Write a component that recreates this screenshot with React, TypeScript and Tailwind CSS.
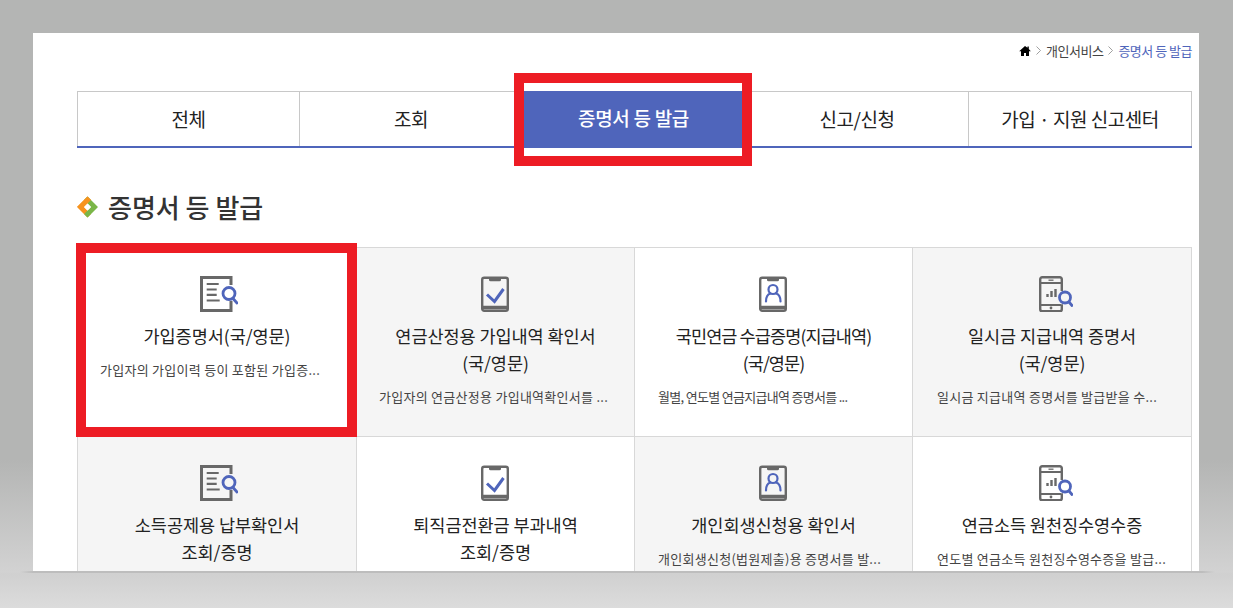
import React from "react";

const G = "#686868";
const B = "#4f65bb";

function DocIcon() {
  return (
    <svg width="38" height="36" viewBox="0 0 38 36" fill="none" className="ml-[4px]">
      <path d="M31 9V1.500H1.500v33H31V25" stroke={G} strokeWidth="3" />
      <path d="M6.700 8h12M6.700 13.500h10M6.700 18.800h10M6.700 24.500h13" stroke={G} strokeWidth="2.200" />
      <circle cx="29" cy="17.500" r="6" stroke={B} strokeWidth="2.800" fill="none" />
      <path d="M33 22.500l4 4.500" stroke={B} strokeWidth="2.800" strokeLinecap="round" />
    </svg>
  );
}

function Clipboard({ children }: { children: React.ReactNode }) {
  return (
    <svg width="28" height="36" viewBox="0 0 28 36" fill="none" className="mr-[2px]">
      <rect x="1.200" y="1.700" width="25.600" height="33" rx="2" stroke={G} strokeWidth="2.400" />
      <path d="M1.500 31.500h25" stroke={G} strokeWidth="3.500" />
      <path d="M8 1h12v2.800a1.500 1.500 0 0 1-1.500 1.500h-9A1.500 1.500 0 0 1 8 3.800z" fill={G} />
      {children}
    </svg>
  );
}

function CheckIcon() {
  return (
    <Clipboard>
      <path d="M6 18.500l7.500 7 9-12.500" stroke={B} strokeWidth="3" />
    </Clipboard>
  );
}

function PersonIcon() {
  return (
    <Clipboard>
      <circle cx="14" cy="13.500" r="4.500" stroke={B} strokeWidth="2.200" />
      <path d="M7 25.500c0-5 2.500-7.500 4.500-8M21.500 25.500c0-5-2.500-7.500-4.500-8" stroke={B} strokeWidth="2.200" strokeLinecap="round" />
    </Clipboard>
  );
}

function PhoneIcon() {
  return (
    <svg width="34" height="36" viewBox="0 0 34 36" fill="none" className="ml-[7px]">
      <path d="M22.800 15V3.300a2 2 0 0 0-2-2H3.200a2 2 0 0 0-2 2v30a2 2 0 0 0 2 2h17.600a2 2 0 0 0 2-2v-5" stroke={G} strokeWidth="2.400" />
      <path d="M2 7h20M2 29h20" stroke={G} strokeWidth="2" />
      <path d="M9.500 4.200h5" stroke={G} strokeWidth="1.300" />
      <circle cx="12" cy="32" r="1.400" fill={G} />
      <path d="M8.500 21v-3M12.500 21v-6M16.500 21v-8" stroke={G} strokeWidth="2.400" />
      <circle cx="26" cy="21.500" r="5.500" stroke={B} strokeWidth="2.800" />
      <path d="M30 26l3 3.500" stroke={B} strokeWidth="2.800" strokeLinecap="round" />
    </svg>
  );
}

function Chevron() {
  return (
    <svg width="5" height="9" viewBox="0 0 5 9" fill="none" className="mt-[4px]">
      <path d="M0.500 0.500l4 4-4 4" stroke="#888" strokeWidth="0.800" />
    </svg>
  );
}

const WHITE = "bg-white";
const GRAY = "bg-[#f5f5f5]";
const TITLE = "tracking-[-0.05px]";
const DESC = "tracking-[0.27px]";

const cards = [
  { icon: <DocIcon />, t: ["가입증명서(국/영문)"], d: "가입자의 가입이력 등이 포함된 가입증...", bg: WHITE, ts: TITLE, ds: DESC, ml: "ml-[22px]" },
  { icon: <CheckIcon />, t: ["연금산정용 가입내역 확인서", "(국/영문)"], d: "가입자의 연금산정용 가입내역확인서를 ...", bg: GRAY, ts: TITLE, ds: DESC, ml: "ml-[22px]" },
  { icon: <PersonIcon />, t: ["국민연금 수급증명(지급내역)", "(국/영문)"], d: "월별, 연도별 연금지급내역 증명서를 ...", bg: WHITE, ts: "tracking-[-0.9px]", ds: "tracking-[-0.7px]", ml: "ml-[23px]" },
  { icon: <PhoneIcon />, t: ["일시금 지급내역 증명서", "(국/영문)"], d: "일시금 지급내역 증명서를 발급받을 수...", bg: GRAY, ts: TITLE, ds: DESC, ml: "ml-[24px]" },
  { icon: <DocIcon />, t: ["소득공제용 납부확인서", "조회/증명"], d: "", bg: GRAY, ts: TITLE, ds: DESC, ml: "ml-[22px]" },
  { icon: <CheckIcon />, t: ["퇴직금전환금 부과내역", "조회/증명"], d: "", bg: WHITE, ts: TITLE, ds: DESC, ml: "ml-[22px]" },
  { icon: <PersonIcon />, t: ["개인회생신청용 확인서"], d: "개인회생신청(법원제출)용 증명서를 발...", bg: GRAY, ts: TITLE, ds: DESC, ml: "ml-[23px]" },
  { icon: <PhoneIcon />, t: ["연금소득 원천징수영수증"], d: "연도별 연금소득 원천징수영수증을 발급...", bg: WHITE, ts: TITLE, ds: DESC, ml: "ml-[24px]" },
];

const tabs = [
  { t: "전체", w: "w-[222px]" },
  { t: "조회", w: "w-[223px]" },
  { t: "증명서 등 발급", w: "w-[223px]" },
  { t: "신고/신청", w: "w-[223px]" },
  { t: "가입 · 지원 신고센터", w: "w-[224px]" },
];

export default function App() {
  return (
    <div className="relative h-[608px] w-[1233px] overflow-hidden bg-[linear-gradient(180deg,#b4b5b4_0,#b4b5b4_460px,#d2d2d2_572px,#d0d0d0_574px,#dcdcdc_608px)] pl-[33px] pt-[33px] font-['Noto_Sans_CJK_KR','Liberation_Sans',sans-serif] text-[#222]">
      <div className="relative h-[539px] w-[1166px] overflow-hidden bg-white pl-[44px] pr-[7px]">
        <div className="flex h-[58px] items-start justify-end gap-[5px] pt-[9px] text-[13px] leading-[17px] tracking-[-0.5px] text-[#444]">
          <svg width="12" height="12" viewBox="0 0 12 12" className="mt-[3px]">
            <path d="M6 1L0.200 6.200H2V11h3V8h2v3h3V6.200h1.800L9.800 4V1.500H8.500v1.300z" fill="#000" />
          </svg>
          <Chevron />
          <span>개인서비스</span>
          <Chevron />
          <span className="text-[#4f65bb]">증명서 등 발급</span>
        </div>

        <div className="flex h-[57px] border-b-2 border-[#4f65bb]">
          {tabs.map((t, i) => (
            <div
              key={t.t}
              className={
                i === 2
                  ? `flex ${t.w} items-center justify-center bg-[#4f65bb] text-[19px] font-medium tracking-[-0.3px] text-white`
                  : `flex ${t.w} items-center justify-center border-l border-t border-[#c8c8c8] text-[19px] tracking-[-0.5px] last:border-r`
              }
            >
              {t.t}
            </div>
          ))}
        </div>

        <div className="mt-[39px] flex h-[40px] items-center gap-[10px]">
          <svg width="21" height="22" viewBox="0 0 21 22">
            <path d="M10.500 0.500L0 11l10.500 10.500 3.500-3.500-7-7 7-7z" fill="#f7931e" />
            <path d="M10.500 0.500L21 11 10.500 21.500 7 18l7-7-3.500-3.500L7 4z" fill="#7ab648" />
            <path d="M10.500 0.500L0 11l7 0 3.500-3.500L14 4z" fill="#f7931e" />
            <path d="M10.500 7.500L14 11l-3.500 3.500L7 11z" fill="#fff" />
          </svg>
          <h2 className="text-[26px] font-medium leading-[40px] text-[#333]">증명서 등 발급</h2>
        </div>

        <div className="mt-[20px] grid w-[1115px] grid-cols-[279px_278px_278px_279px] border-l border-t border-[#d8d8d8]">
          {cards.map((c, i) => (
            <div
              key={i}
              className={`flex h-[189px] flex-col items-center border-b border-r border-[#d8d8d8] pt-[28px] ${c.bg}`}
            >
              <div className="flex h-[36px] items-center justify-center">{c.icon}</div>
              <div className={`mt-[10px] text-center text-[17.5px] leading-[27px] text-[#222] ${c.ts}`}>
                {c.t.map((l) => (
                  <div key={l}>{l}</div>
                ))}
              </div>
              {c.d && (
                <p className={`mt-[12px] self-start whitespace-nowrap text-[13px] leading-[18px] text-[#444] ${c.ml} ${c.ds}`}>
                  {c.d}
                </p>
              )}
            </div>
          ))}
        </div>

        <div className="absolute left-[481px] top-[40px] h-[93px] w-[238px] border-[10px] border-[#ed1c24]" />
        <div className="absolute left-[43px] top-[210px] h-[194px] w-[281px] border-[10px] border-[#ed1c24]" />
      </div>
      <div className="absolute left-[20px] top-[571px] h-[2px] w-[1195px] bg-[linear-gradient(90deg,transparent,#bdbdbd_13px,#bdbdbd_1182px,transparent)]" />
    </div>
  );
}
